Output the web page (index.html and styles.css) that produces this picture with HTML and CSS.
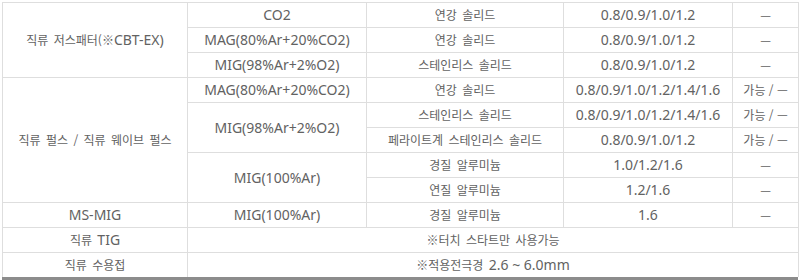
FILE: index.html
```html
<!DOCTYPE html>
<html lang="ko">
<head>
<meta charset="utf-8">
<link rel="stylesheet" href="styles.css">
</head>
<body>
<div class="wrap">
<table class="spec">
  <colgroup>
    <col class="c1"><col class="c2"><col class="c3"><col class="c4"><col class="c5">
  </colgroup>
  <tbody>
    <tr>
      <td rowspan="3"><span class="k">직류 저스패터(</span><span class="k">※</span>CBT-EX)</td>
      <td>CO2</td>
      <td class="k">연강 솔리드</td>
      <td>0.8/0.9/1.0/1.2</td>
      <td class="k">—</td>
    </tr>
    <tr>
      <td>MAG(80%Ar+20%CO2)</td>
      <td class="k">연강 솔리드</td>
      <td>0.8/0.9/1.0/1.2</td>
      <td class="k">—</td>
    </tr>
    <tr>
      <td>MIG(98%Ar+2%O2)</td>
      <td class="k">스테인리스 솔리드</td>
      <td>0.8/0.9/1.0/1.2</td>
      <td class="k">—</td>
    </tr>
    <tr>
      <td rowspan="5" class="k">직류 펄스 / 직류 웨이브 펄스</td>
      <td>MAG(80%Ar+20%CO2)</td>
      <td class="k">연강 솔리드</td>
      <td>0.8/0.9/1.0/1.2/1.4/1.6</td>
      <td class="k tight">가능 / —</td>
    </tr>
    <tr>
      <td rowspan="2">MIG(98%Ar+2%O2)</td>
      <td class="k">스테인리스 솔리드</td>
      <td>0.8/0.9/1.0/1.2/1.4/1.6</td>
      <td class="k tight">가능 / —</td>
    </tr>
    <tr>
      <td class="k">페라이트계 스테인리스 솔리드</td>
      <td>0.8/0.9/1.0/1.2</td>
      <td class="k tight">가능 / —</td>
    </tr>
    <tr>
      <td rowspan="2">MIG(100%Ar)</td>
      <td class="k">경질 알루미늄</td>
      <td>1.0/1.2/1.6</td>
      <td class="k">—</td>
    </tr>
    <tr>
      <td class="k">연질 알루미늄</td>
      <td>1.2/1.6</td>
      <td class="k">—</td>
    </tr>
    <tr>
      <td>MS-MIG</td>
      <td>MIG(100%Ar)</td>
      <td class="k">경질 알루미늄</td>
      <td>1.6</td>
      <td class="k">—</td>
    </tr>
    <tr>
      <td><span class="k">직류 </span>TIG</td>
      <td colspan="4" class="k">※터치 스타트만 사용가능</td>
    </tr>
    <tr>
      <td class="k">직류 수용접</td>
      <td colspan="4"><span class="k">※적용전극경 </span>2.6 ~ 6.0mm</td>
    </tr>
  </tbody>
</table>
<div class="base"></div>
</div>
</body>
</html>
```

FILE: styles.css
```css
html, body {
  margin: 0;
  padding: 0;
  background: #fff;
}

.wrap {
  padding: 2px 2px 0 2px;
}

.spec {
  width: 796px;
  border-collapse: collapse;
  table-layout: fixed;
  font-family: "Noto Sans", "Noto Sans CJK KR", sans-serif;
  font-size: 14px;
  color: #626262;
}

.c1 { width: 185px; }
.c2 { width: 179px; }
.c3 { width: 197px; }
.c4 { width: 169px; }
.c5 { width: 66px; }

.spec td {
  border: 1px solid #dedede;
  height: 24px;
  padding: 0;
  text-align: center;
  vertical-align: middle;
  line-height: 20px;
  white-space: nowrap;
}

.spec tr:last-child td {
  border-bottom: none;
}

.k {
  font-family: "Noto Sans CJK KR", sans-serif;
  font-size: 12px;
  word-spacing: 2px;
}

.k.tight {
  word-spacing: 0;
}

.base {
  height: 3px;
  background: #8c8c8c;
}
```
